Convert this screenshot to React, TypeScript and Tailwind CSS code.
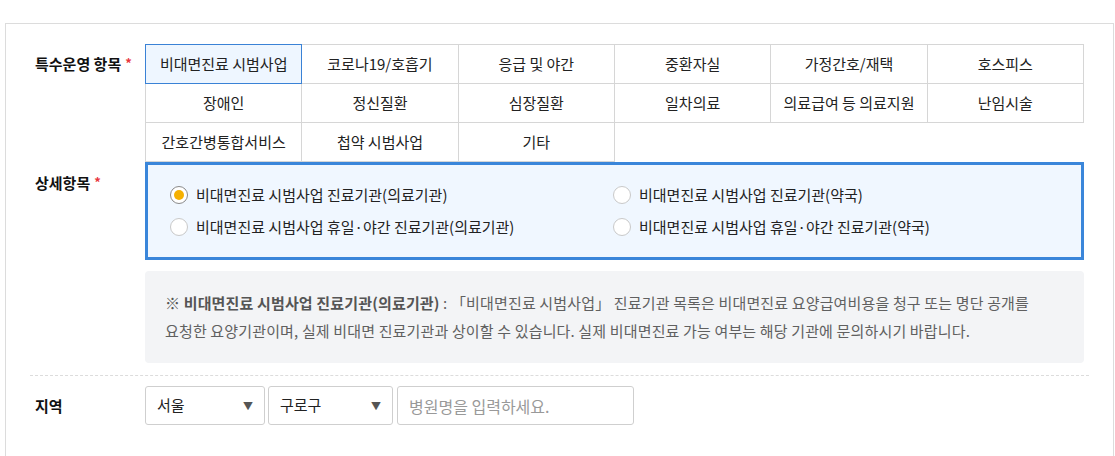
import React from "react";

const ROW1 = ["비대면진료 시범사업", "코로나19/호흡기", "응급 및 야간", "중환자실", "가정간호/재택", "호스피스"];
const ROW2 = ["장애인", "정신질환", "심장질환", "일차의료", "의료급여 등 의료지원", "난임시술"];
const ROW3 = ["간호간병통합서비스", "첩약 시범사업", "기타"];

function Radio({ checked, label }: { checked?: boolean; label: string }) {
  return (
    <div className="flex h-[32px] items-center">
      <span
        className={
          checked
            ? "flex h-[18px] w-[18px] shrink-0 items-center justify-center rounded-full border border-[#8a8a8a] bg-white"
            : "flex h-[18px] w-[18px] shrink-0 items-center justify-center rounded-full border border-[#c9c9c9] bg-white"
        }
      >
        {checked && <span className="h-[10px] w-[10px] rounded-full bg-[#f5b000]" />}
      </span>
      <span className="ml-[8px] whitespace-nowrap text-[15px] text-[#222]">{label}</span>
    </div>
  );
}

function Label({ text, star }: { text: string; star?: boolean }) {
  return (
    <span className="text-[15px] font-bold text-[#111]">
      {text}
      {star && <span className="ml-[4px] align-top text-[13px] text-[#e8383d]">*</span>}
    </span>
  );
}

export default function App() {
  const cells = [...ROW1, ...ROW2, ...ROW3];
  return (
    <div
      className="min-h-screen bg-white pl-[5px] pr-px pt-[23px]"
      style={{ fontFamily: '"Noto Sans CJK KR", "Noto Sans", sans-serif' }}
    >
      <div className="h-[440px] border border-b-0 border-[#dcdcdc] px-[24px] pt-[20px]">
        {/* 특수운영 항목 */}
        <div className="flex">
          <div className="flex h-[40px] w-[115px] shrink-0 items-center pl-[5px]">
            <Label text="특수운영 항목" star />
          </div>
          <div className="grid w-[939px] grid-cols-6 border-l border-t border-[#d6d6d6]">
            {cells.map((c, i) => (
              <div
                key={c}
                className={
                  i === 0
                    ? "relative flex h-[39px] items-center justify-center whitespace-nowrap border-b border-r border-[#d6d6d6] bg-[#eef6ff] text-[15px] text-[#222]"
                    : "flex h-[39px] items-center justify-center whitespace-nowrap border-b border-r border-[#d6d6d6] text-[15px] text-[#222]"
                }
              >
                {i === 0 && (
                  <span className="pointer-events-none absolute -bottom-px -left-px -right-px -top-px border border-[#3a82d6]" />
                )}
                <span className="relative">{c}</span>
              </div>
            ))}
          </div>
        </div>

        {/* 상세항목 */}
        <div className="flex">
          <div className="w-[115px] shrink-0 pl-[5px] pt-[9px] leading-[22px]">
            <Label text="상세항목" star />
          </div>
          <div className="w-[939px]">
            <div className="grid h-[98px] grid-cols-[443px_1fr] border-[3px] border-[#3a86da] bg-[#f0f7ff] py-[14px] pl-[22px]">
              <Radio checked label="비대면진료 시범사업 진료기관(의료기관)" />
              <Radio label="비대면진료 시범사업 진료기관(약국)" />
              <Radio label="비대면진료 시범사업 휴일·야간 진료기관(의료기관)" />
              <Radio label="비대면진료 시범사업 휴일·야간 진료기관(약국)" />
            </div>
            <div className="mt-[11px] h-[92px] rounded-[4px] bg-[#f3f4f6] px-[20px] py-[18px] text-[15px] leading-[28px] tracking-[0.15px] text-[#606060]">
              <div className="whitespace-nowrap">
                <span className="font-bold text-[#555]">※ 비대면진료 시범사업 진료기관(의료기관)</span>
                {" : 「비대면진료 시범사업」 진료기관 목록은 비대면진료 요양급여비용을 청구 또는 명단 공개를"}
              </div>
              <div className="whitespace-nowrap">
                요청한 요양기관이며, 실제 비대면 진료기관과 상이할 수 있습니다. 실제 비대면진료 가능 여부는 해당 기관에 문의하시기 바랍니다.
              </div>
            </div>
          </div>
        </div>

        <div className="mt-[12px] border-t border-dashed border-[#dcdcdc]" />

        {/* 지역 */}
        <div className="mt-[10px] flex items-center">
          <div className="w-[115px] shrink-0 pl-[5px]">
            <Label text="지역" />
          </div>
          <div className="flex">
            <div className="flex h-[39px] w-[120px] items-center justify-between rounded-[3px] border border-[#cfcfcf] bg-white pl-[11px] pr-[11px] text-[15px] text-[#222]">
              <span>서울</span>
              <span className="text-[10px] text-[#555]">▼</span>
            </div>
            <div className="ml-[3px] flex h-[39px] w-[125px] items-center justify-between rounded-[3px] border border-[#cfcfcf] bg-white pl-[11px] pr-[11px] text-[15px] text-[#222]">
              <span>구로구</span>
              <span className="text-[10px] text-[#555]">▼</span>
            </div>
            <input
              className="ml-[4px] h-[39px] w-[237px] rounded-[3px] border border-[#cfcfcf] bg-white px-[11px] text-[16px] text-[#222] outline-none placeholder:text-[#999]"
              placeholder="병원명을 입력하세요."
            />
          </div>
        </div>
      </div>
    </div>
  );
}
